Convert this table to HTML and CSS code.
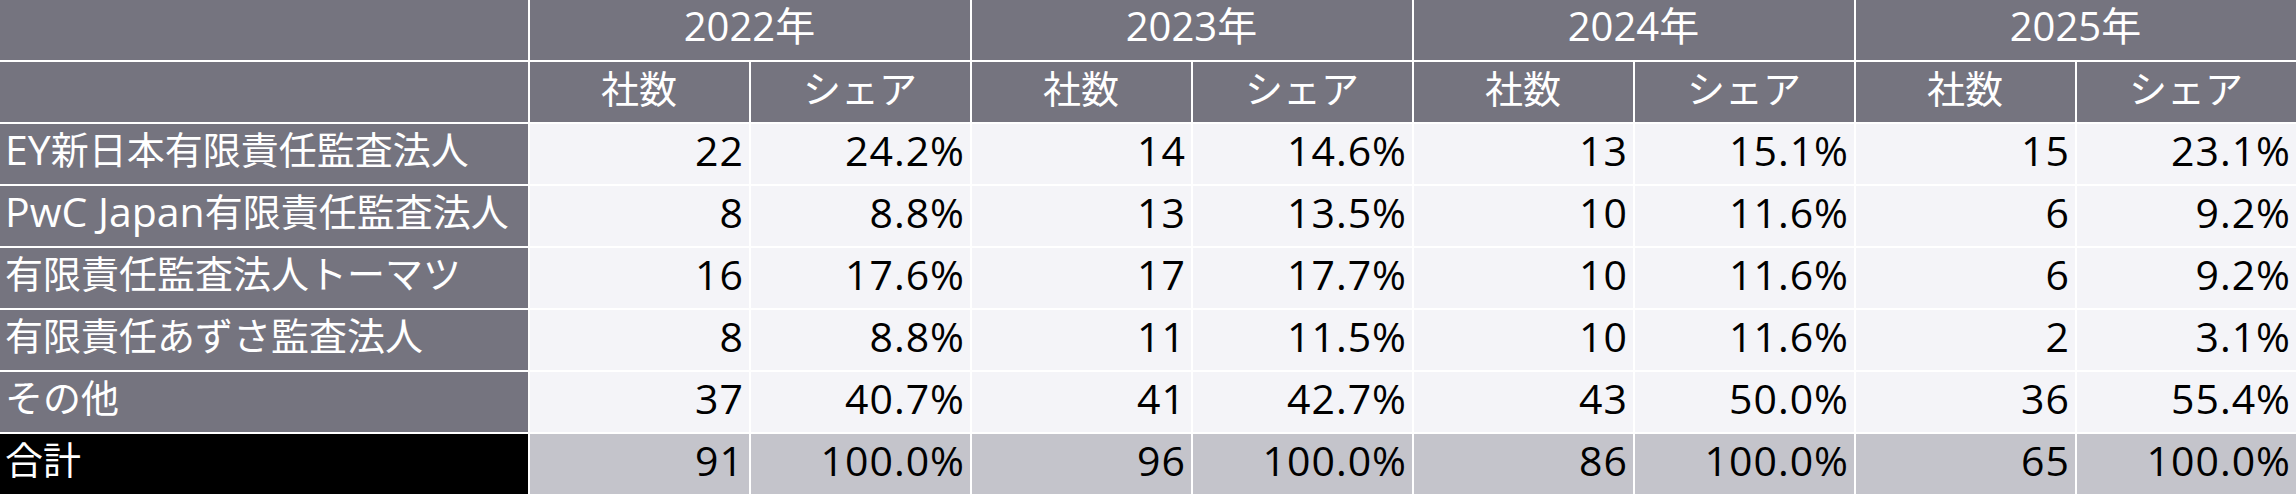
FILE: index.html
```html
<!DOCTYPE html>
<html lang="ja">
<head>
<meta charset="utf-8">
<link rel="stylesheet" href="styles.css">
</head>
<body>
<div class="tbl">
  <div class="c hd"></div>
  <div class="c hd yr">2022年</div>
  <div class="c hd yr">2023年</div>
  <div class="c hd yr">2024年</div>
  <div class="c hd yr">2025年</div>

  <div class="c hd"></div>
  <div class="c hd sub">社数</div><div class="c hd sub">シェア</div>
  <div class="c hd sub">社数</div><div class="c hd sub">シェア</div>
  <div class="c hd sub">社数</div><div class="c hd sub">シェア</div>
  <div class="c hd sub">社数</div><div class="c hd sub">シェア</div>

  <div class="c lbl"><span class="lat">EY</span>新日本有限責任監査法人</div>
  <div class="c num">22</div><div class="c num">24.2%</div>
  <div class="c num">14</div><div class="c num">14.6%</div>
  <div class="c num">13</div><div class="c num">15.1%</div>
  <div class="c num">15</div><div class="c num">23.1%</div>

  <div class="c lbl"><span class="lat">PwC Japan</span>有限責任監査法人</div>
  <div class="c num">8</div><div class="c num">8.8%</div>
  <div class="c num">13</div><div class="c num">13.5%</div>
  <div class="c num">10</div><div class="c num">11.6%</div>
  <div class="c num">6</div><div class="c num">9.2%</div>

  <div class="c lbl">有限責任監査法人トーマツ</div>
  <div class="c num">16</div><div class="c num">17.6%</div>
  <div class="c num">17</div><div class="c num">17.7%</div>
  <div class="c num">10</div><div class="c num">11.6%</div>
  <div class="c num">6</div><div class="c num">9.2%</div>

  <div class="c lbl">有限責任あずさ監査法人</div>
  <div class="c num">8</div><div class="c num">8.8%</div>
  <div class="c num">11</div><div class="c num">11.5%</div>
  <div class="c num">10</div><div class="c num">11.6%</div>
  <div class="c num">2</div><div class="c num">3.1%</div>

  <div class="c lbl">その他</div>
  <div class="c num">37</div><div class="c num">40.7%</div>
  <div class="c num">41</div><div class="c num">42.7%</div>
  <div class="c num">43</div><div class="c num">50.0%</div>
  <div class="c num">36</div><div class="c num">55.4%</div>

  <div class="c lbl total-lbl">合計</div>
  <div class="c num total">91</div><div class="c num total">100.0%</div>
  <div class="c num total">96</div><div class="c num total">100.0%</div>
  <div class="c num total">86</div><div class="c num total">100.0%</div>
  <div class="c num total">65</div><div class="c num total">100.0%</div>
</div>
</body>
</html>
```

FILE: styles.css
```css
html, body {
  margin: 0;
  padding: 0;
  background: #ffffff;
}

.tbl {
  display: grid;
  grid-template-columns: 528px repeat(8, 1fr);
  grid-auto-rows: 60px;
  gap: 2px;
  width: 2296px;
  height: 494px;
  background: #ffffff;
  font-family: "Open Sans", "Noto Sans CJK JP", sans-serif;
  font-weight: 400;
  font-size: 38px;
  line-height: 1;
}

.c {
  display: flex;
  align-items: center;
  padding: 0 6px 9px 5px;
  white-space: nowrap;
  box-sizing: border-box;
  min-width: 0;
}

.hd {
  background: #75747f;
  color: #ffffff;
  justify-content: center;
  padding-bottom: 9px;
}

.yr {
  grid-column: span 2;
  font-size: 40px;
  padding-bottom: 9px;
}

.lbl {
  background: #75747f;
  color: #ffffff;
  justify-content: flex-start;
  padding-bottom: 10px;
}

.lat {
  font-size: 41px;
}

.num {
  background: #f4f4f8;
  color: #000000;
  justify-content: flex-end;
  font-size: 41px;
  letter-spacing: 1px;
  padding-right: 5px;
  padding-bottom: 8px;
}

.total-lbl {
  background: #000000;
  color: #ffffff;
}

.num.total {
  background: #c4c4cb;
}
```
